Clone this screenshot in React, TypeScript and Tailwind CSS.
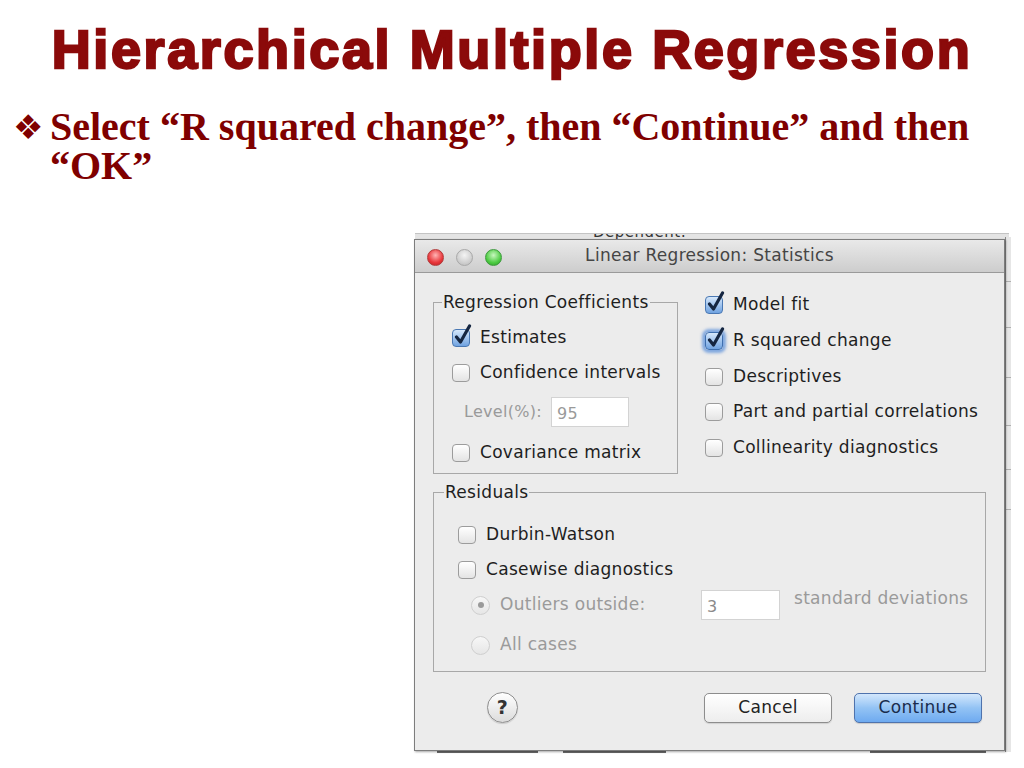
import React from "react";

const UI = { fontFamily: '"DejaVu Sans", "Open Sans", sans-serif' };

function Check({ checked = false, focus = false }: { checked?: boolean; focus?: boolean }) {
  return (
    <span className="relative inline-block w-[18px] h-[18px] shrink-0">
      <span
        className={
          checked
            ? focus
              ? "absolute inset-0 rounded-[4px] border border-[#3f6fae] bg-gradient-to-b from-[#d6e8fb] to-[#6fa2e0] shadow-[0_0_3px_3px_rgba(70,130,215,0.65)]"
              : "absolute inset-0 rounded-[4px] border border-[#4a78b3] bg-gradient-to-b from-[#d6e8fb] to-[#6fa2e0]"
            : "absolute inset-0 rounded-[4px] border border-[#9c9c9c] bg-gradient-to-b from-white to-[#e4e4e4]"
        }
      />
      {checked && (
        <svg className="absolute left-[1px] top-[-5px]" width="20" height="22" viewBox="0 0 20 22">
          <path d="M3.5 13 L7.5 18 L16.5 2" fill="none" stroke="#152641" strokeWidth="3.2" strokeLinecap="round" strokeLinejoin="round" />
        </svg>
      )}
    </span>
  );
}

function Radio({ selected = false }: { selected?: boolean }) {
  return (
    <span className="relative inline-flex items-center justify-center w-[19px] h-[19px] rounded-full border border-[#cfcfcf] bg-gradient-to-b from-[#f7f7f7] to-[#e6e6e6] shrink-0">
      {selected && <span className="w-[6px] h-[6px] rounded-full bg-[#9a9a9a]" />}
    </span>
  );
}

function Row({ children, className }: { children: React.ReactNode; className: string }) {
  return <div className={"flex items-center " + className}>{children}</div>;
}

export default function App() {
  return (
    <div className="w-[1024px] h-[768px] bg-white overflow-hidden">
      {/* Heading */}
      <h1
        className="text-center text-[54px] leading-[52px] font-bold text-[#8b0a0a] pt-[23px] tracking-[2.6px] [-webkit-text-stroke:2.4px_#8b0a0a]"
        style={{ fontFamily: '"Liberation Sans", Arial, sans-serif' }}
      >
        Hierarchical Multiple Regression
      </h1>

      {/* Bullet */}
      <div className="flex mt-[32px] text-[#7f0000]">
        <div className="w-[50px] pl-[13px] text-[34px] leading-[40px]" style={{ fontFamily: '"DejaVu Sans", sans-serif' }}>
          ❖
        </div>
        <div
          className="w-[940px] text-[40px] leading-[39px] font-bold"
          style={{ fontFamily: '"Liberation Serif", "Times New Roman", serif' }}
        >
          Select “R squared change”, then “Continue” and then “OK”
        </div>
      </div>

      {/* Screenshot */}
      <div className="ml-[414px] mt-[48px] w-[597px] h-[523px] relative" style={UI}>
        {/* background window pieces */}
        <div className="absolute left-[1px] right-[2px] top-0 h-[7px] bg-[#e4e4e4] border-t border-[#c4c4c4] overflow-hidden">
          <span className="absolute left-[178px] top-[-11px] text-[15px] leading-[18px] text-[#333] tracking-[0.5px]">Dependent:</span>
        </div>
        <div className="absolute right-[0px] top-[4px] bottom-[4px] w-[6px] bg-[#e6e6e6] border-l border-[#8a8a8a]">
          <div className="absolute left-0 right-0 top-[44px] h-px bg-[#b0b0b0]" />
          <div className="absolute left-0 right-0 top-[90px] h-px bg-[#b0b0b0]" />
          <div className="absolute left-0 right-0 top-[140px] h-px bg-[#b0b0b0]" />
          <div className="absolute left-0 right-0 top-[188px] h-px bg-[#b0b0b0]" />
          <div className="absolute left-0 right-0 top-[232px] h-px bg-[#b0b0b0]" />
          <div className="absolute left-0 right-0 top-[272px] h-px bg-[#b0b0b0]" />
        </div>
        <div className="absolute left-[23px] top-[517px] w-[101px] h-[3px] bg-[#6b6b6b]" />
        <div className="absolute left-[149px] top-[517px] w-[103px] h-[3px] bg-[#6b6b6b]" />
        <div className="absolute left-[456px] top-[517px] w-[116px] h-[3px] bg-[#6b6b6b]" />

        {/* Dialog */}
        <div className="absolute left-0 top-[6px] w-[591px] h-[512px] bg-[#ececec] border border-[#7d7d7d] shadow-[1px_1px_2px_rgba(0,0,0,0.35)] flex flex-col">
          {/* title bar */}
          <div className="h-[33px] shrink-0 relative flex items-center justify-center bg-gradient-to-b from-[#e9e9e9] to-[#cdcdcd] border-b border-[#9a9a9a]">
            <div className="absolute left-[12px] top-[9px] flex gap-[12px]">
              <span className="w-[17px] h-[17px] rounded-full border border-[#b23a3a] bg-[radial-gradient(circle_at_50%_35%,#ffb4b4,#e8363a_60%,#b81d22)]" />
              <span className="w-[17px] h-[17px] rounded-full border border-[#a8a8a8] bg-[radial-gradient(circle_at_50%_35%,#f4f4f4,#d0d0d0_60%,#b8b8b8)]" />
              <span className="w-[17px] h-[17px] rounded-full border border-[#3d9a3d] bg-[radial-gradient(circle_at_50%_35%,#c8f7bf,#4fcc44_60%,#2c9a26)]" />
            </div>
            <span className="text-[17px] tracking-[0.3px] text-[#454545]">Linear Regression: Statistics</span>
          </div>

          {/* body */}
          <div className="flex-1 px-[18px] pt-[16px] text-[17px] tracking-[0.3px] text-[#1e1e1e]">
            <div className="flex items-start">
              <fieldset className="w-[245px] mt-[3px] border border-[#a8a8a8] pl-[18px] pr-[4px] pt-[8px] pb-[1px]">
                <legend className="ml-[-10px] px-[1px] leading-[20px]">Regression Coefficients</legend>
                <Row className="h-[35px] gap-[10px]">
                  <Check checked />
                  <span>Estimates</span>
                </Row>
                <Row className="h-[35px] gap-[10px]">
                  <Check />
                  <span>Confidence intervals</span>
                </Row>
                <Row className="h-[44px] pl-[12px]">
                  <span className="text-[16px] text-[#9a9a9a] w-[87px]">Level(%):</span>
                  <span className="w-[78px] h-[30px] bg-white border border-[#d3d3d3] text-[#9a9a9a] text-[16px] pl-[5px] pt-[5px] leading-[22px]">95</span>
                </Row>
                <Row className="h-[38px] gap-[10px]">
                  <Check />
                  <span>Covariance matrix</span>
                </Row>
              </fieldset>

              <div className="ml-[27px] mt-[-2px] flex flex-col">
                <Row className="h-[36px] gap-[10px]">
                  <Check checked />
                  <span>Model fit</span>
                </Row>
                <Row className="h-[36px] gap-[10px]">
                  <Check checked focus />
                  <span>R squared change</span>
                </Row>
                <Row className="h-[35px] gap-[10px]">
                  <Check />
                  <span>Descriptives</span>
                </Row>
                <Row className="h-[36px] gap-[10px]">
                  <Check />
                  <span>Part and partial correlations</span>
                </Row>
                <Row className="h-[35px] gap-[10px]">
                  <Check />
                  <span>Collinearity diagnostics</span>
                </Row>
              </div>
            </div>

            <fieldset className="mt-[8px] border border-[#a8a8a8] pl-[24px] pt-[15px] pb-[4px]">
              <legend className="ml-[-14px] px-[1px] leading-[20px]">Residuals</legend>
              <Row className="h-[36px] gap-[10px]">
                <Check />
                <span>Durbin-Watson</span>
              </Row>
              <Row className="h-[34px] gap-[10px]">
                <Check />
                <span>Casewise diagnostics</span>
              </Row>
              <Row className="h-[36px] pl-[13px] text-[#9a9a9a]">
                <Radio selected />
                <span className="ml-[10px] w-[201px]">Outliers outside:</span>
                <span className="w-[79px] h-[30px] bg-white border border-[#d3d3d3] text-[16px] pl-[5px] pt-[5px] leading-[22px] text-[#8a8a8a]">3</span>
                <span className="ml-[14px] mt-[-12px]">standard deviations</span>
              </Row>
              <Row className="h-[44px] pl-[13px] text-[#9a9a9a]">
                <Radio />
                <span className="ml-[10px]">All cases</span>
              </Row>
            </fieldset>

            <div className="flex items-center mt-[20px]">
              <span className="ml-[54px] w-[31px] h-[31px] rounded-full border border-[#8e8e8e] bg-gradient-to-b from-white to-[#dcdcdc] flex items-center justify-center text-[19px] font-bold text-[#333] shadow-[0_1px_1px_rgba(0,0,0,0.15)]">
                ?
              </span>
              <div className="flex-1" />
              <button className="w-[128px] h-[30px] rounded-[5px] border border-[#8d8d8d] bg-gradient-to-b from-white to-[#ededed] text-[17px] text-[#222] shadow-[0_1px_1px_rgba(0,0,0,0.12)]">
                Cancel
              </button>
              <button className="ml-[22px] mr-[4px] w-[128px] h-[30px] rounded-[5px] border border-[#4f73ad] bg-gradient-to-b from-[#d3e7fc] via-[#93c3f4] to-[#6eaaf0] text-[17px] text-[#1a2c4d] shadow-[0_1px_1px_rgba(0,0,0,0.15)]">
                Continue
              </button>
            </div>
          </div>
        </div>
      </div>
    </div>
  );
}
